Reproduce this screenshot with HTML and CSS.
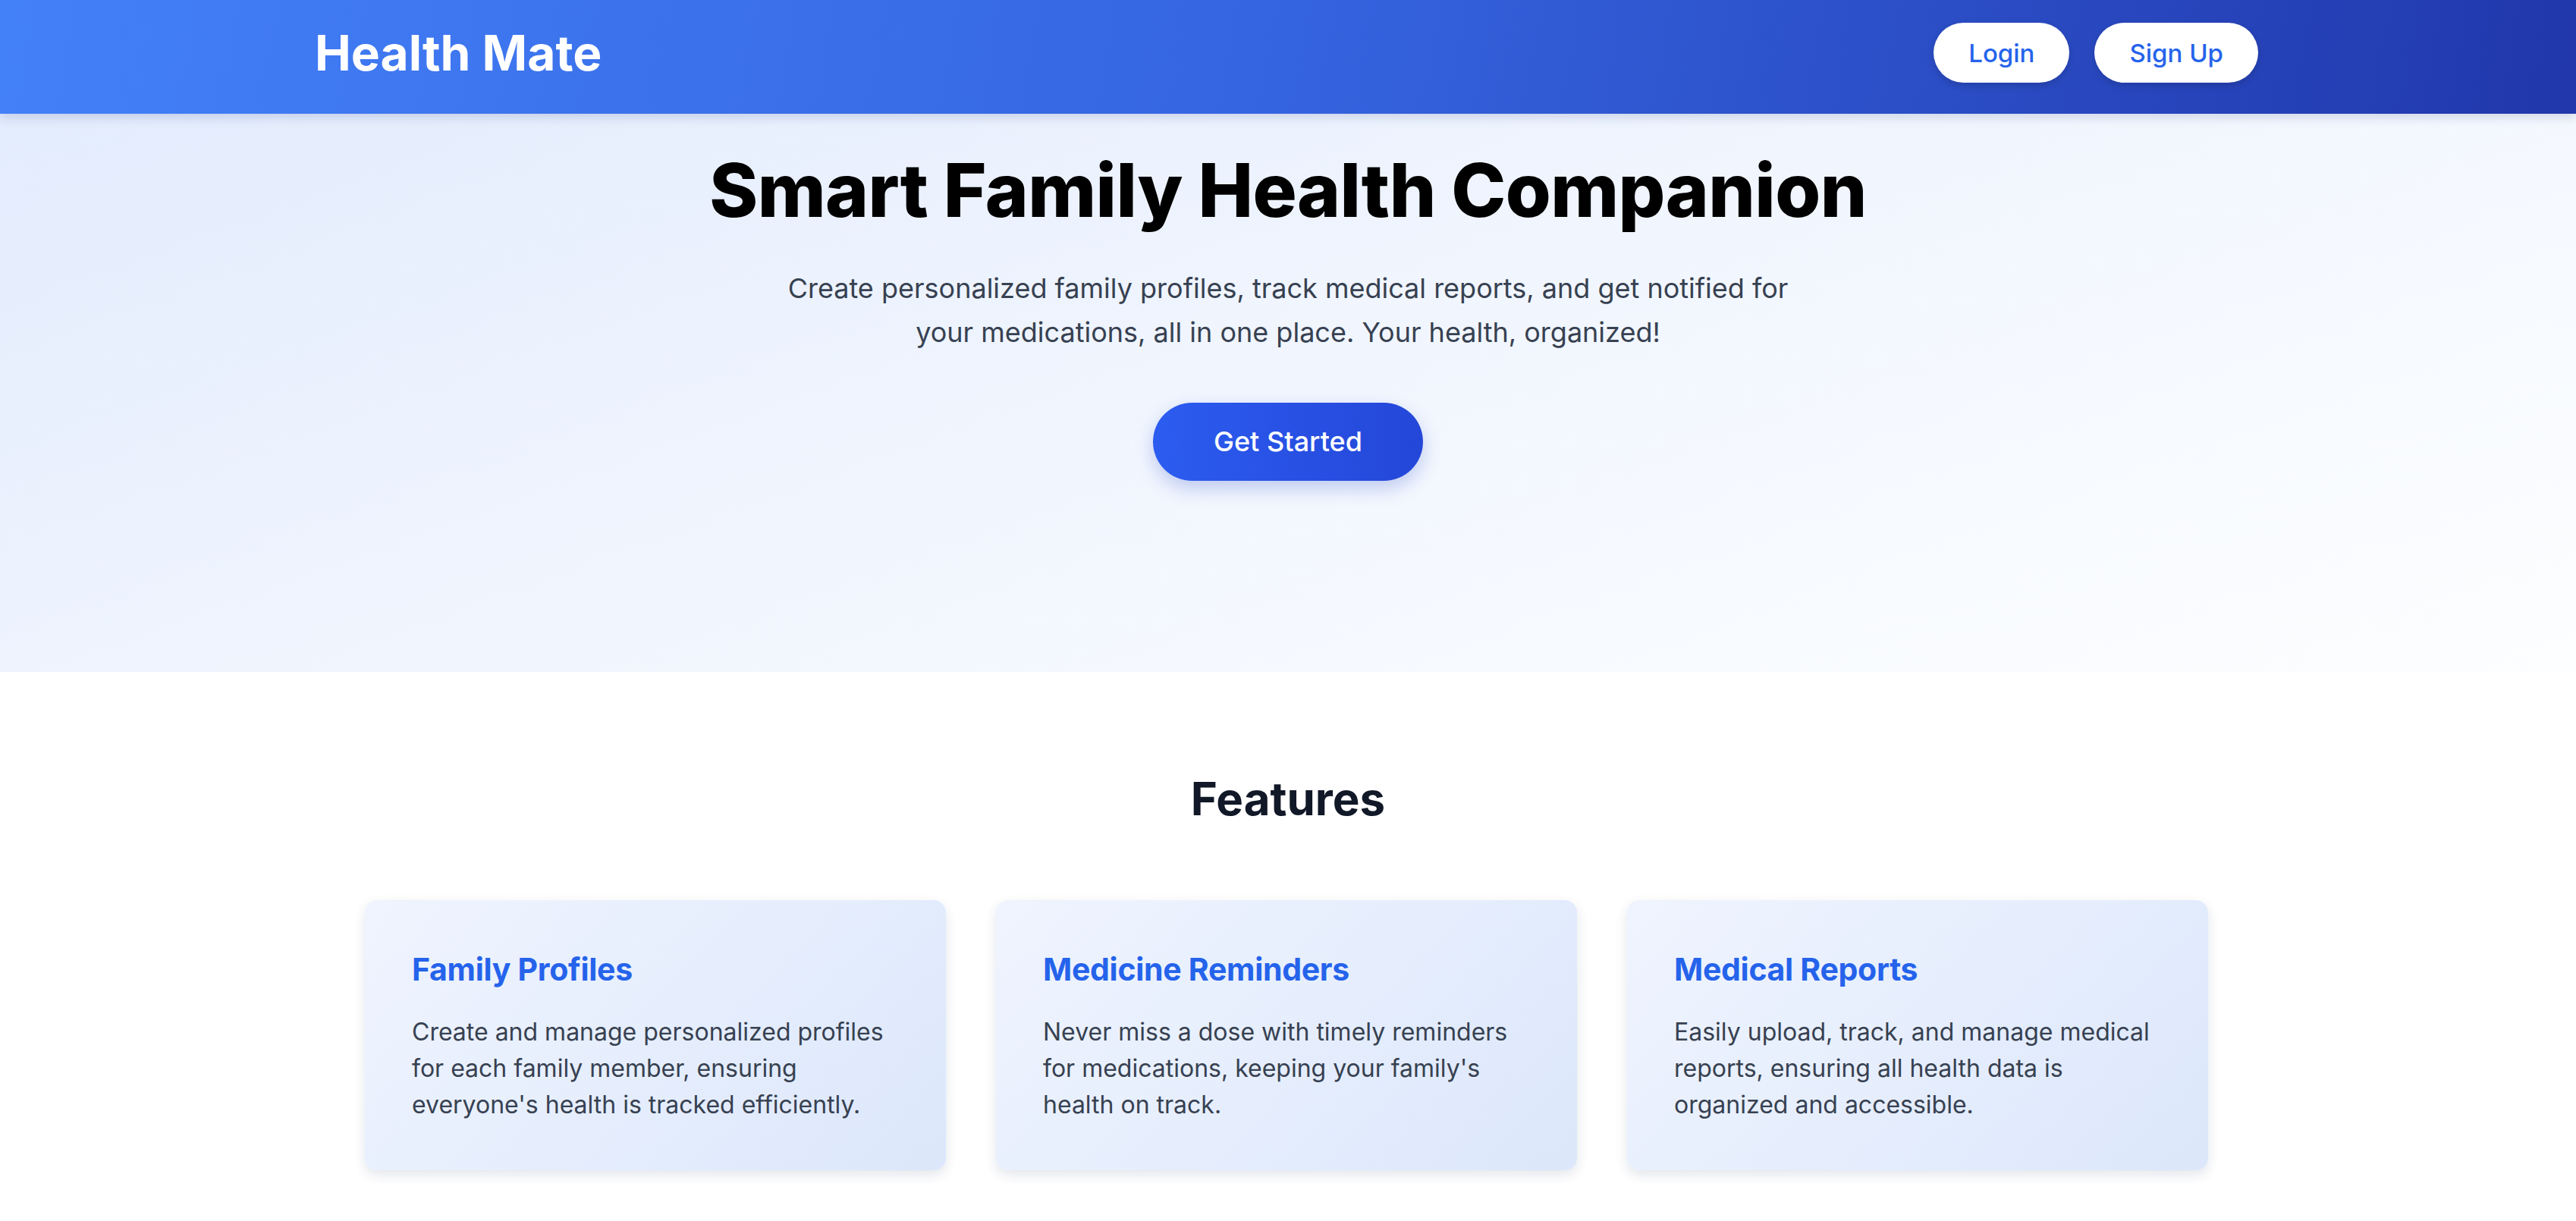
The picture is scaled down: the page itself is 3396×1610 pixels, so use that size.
FILE: index.html
```html
<!DOCTYPE html>
<html lang="en">
<head>
<meta charset="utf-8">
<title>Health Mate</title>
<link rel="stylesheet" href="styles.css">
</head>
<body>
<header class="topbar">
  <div class="topbar-inner">
    <div class="logo">Health Mate</div>
    <nav class="nav">
      <a class="nav-btn" href="#">Login</a>
      <a class="nav-btn" href="#">Sign Up</a>
    </nav>
  </div>
</header>
<section class="hero">
  <h1 class="hero-title">Smart Family Health Companion</h1>
  <p class="hero-text">Create personalized family profiles, track medical reports, and get notified for your medications, all in one place. Your health, organized!</p>
  <a class="cta" href="#">Get Started</a>
</section>
<section class="features">
  <h2 class="features-title">Features</h2>
  <div class="cards">
    <div class="card">
      <h3 class="card-title">Family Profiles</h3>
      <p class="card-text">Create and manage personalized profiles for each family member, ensuring everyone's health is tracked efficiently.</p>
    </div>
    <div class="card">
      <h3 class="card-title">Medicine Reminders</h3>
      <p class="card-text">Never miss a dose with timely reminders for medications, keeping your family's health on track.</p>
    </div>
    <div class="card">
      <h3 class="card-title">Medical Reports</h3>
      <p class="card-text">Easily upload, track, and manage medical reports, ensuring all health data is organized and accessible.</p>
    </div>
  </div>
</section>
</body>
</html>
```
FILE: styles.css
```css
* { box-sizing: border-box; }
html, body { margin: 0; padding: 0; }
body {
  font-family: Inter, "Noto Sans", "Liberation Sans", sans-serif;
  background: #ffffff;
  color: #111827;
}
.topbar {
  background: linear-gradient(100deg, #4381f8 0%, #3564e0 50%, #2137ab 100%);
  padding: 30px 0 41px;
  box-shadow: 0 4px 14px rgba(30, 50, 120, 0.18);
  position: relative;
  z-index: 2;
}
.topbar-inner {
  width: 2558px;
  margin: 0 auto;
  display: flex;
  align-items: center;
  justify-content: space-between;
}
.logo {
  color: #ffffff;
  font-weight: 700;
  font-size: 64px;
  line-height: 79px;
  margin-left: -4px;
}
.nav { display: flex; gap: 33px; }
.nav-btn {
  display: inline-block;
  background: #ffffff;
  color: #2563eb;
  text-decoration: none;
  font-size: 33px;
  font-weight: 500;
  line-height: 40px;
  padding: 19.5px 46px;
  border-radius: 999px;
  box-shadow: 0 4px 10px rgba(0, 0, 0, 0.15);
}
.hero {
  background: linear-gradient(160deg, #e3ecfd 0%, #f0f5fe 45%, #fdfeff 100%);
  padding: 43px 0 252px;
  text-align: center;
  display: flex;
  flex-direction: column;
  align-items: center;
}
.hero-title {
  margin: 0;
  font-size: 97px;
  font-weight: 800;
  line-height: 1.2;
  color: #000000;
  letter-spacing: -0.6px;
}
.hero-text {
  margin: 42px 0 0;
  max-width: 1360px;
  font-size: 36px;
  line-height: 58px;
  color: #374151;
}
.cta {
  margin-top: 64px;
  display: inline-block;
  background: linear-gradient(90deg, #2c5cf0, #2447d8);
  color: #ffffff;
  text-decoration: none;
  font-size: 36px;
  font-weight: 500;
  line-height: 43px;
  padding: 30px 80px;
  border-radius: 999px;
  box-shadow: 0 10px 24px rgba(37, 70, 200, 0.25);
}
.features {
  padding: 131px 0 80px;
  text-align: center;
}
.features-title {
  margin: 0;
  font-size: 60px;
  font-weight: 700;
  line-height: 72px;
  color: #111827;
}
.cards {
  margin: 98px auto 0;
  width: 2430px;
  display: grid;
  grid-template-columns: repeat(3, 1fr);
  gap: 66px;
  text-align: left;
  position: relative;
  left: -2px;
}
.card {
  background: linear-gradient(135deg, #eff4fe 0%, #e6eefd 50%, #dce7fb 100%);
  border-radius: 16px;
  padding: 67px 62px 62px;
  box-shadow: 0 6px 16px rgba(20, 40, 90, 0.12);
}
.card-title {
  margin: 0 0 33px;
  font-size: 41px;
  font-weight: 700;
  line-height: 1.2;
  color: #2563eb;
  letter-spacing: -0.3px;
}
.card-text {
  margin: 0;
  font-size: 32px;
  line-height: 48px;
  color: #374151;
}
```
